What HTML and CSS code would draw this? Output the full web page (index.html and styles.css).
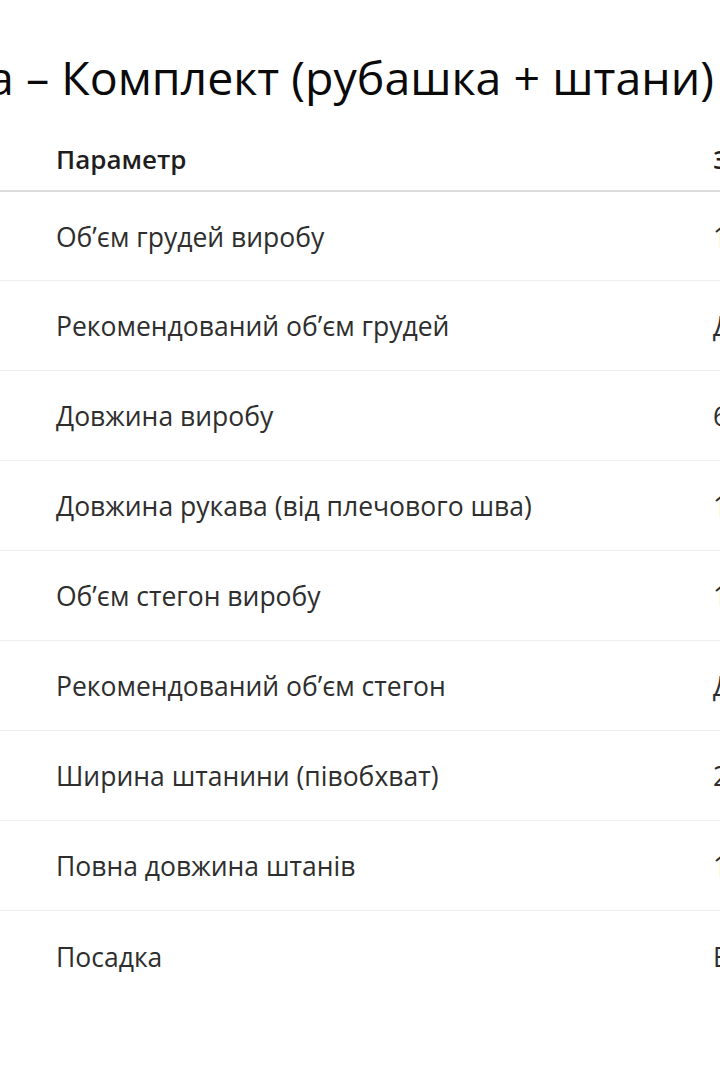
FILE: index.html
```html
<!DOCTYPE html>
<html lang="uk">

<head>
  <meta charset="utf-8">
  <link rel="stylesheet" href="styles.css">
</head>

<body>
  <div class="page">
    <h1 class="title"><span>Піжама – Комплект (рубашка + штани)</span></h1>
    <table class="size-table">
      <colgroup>
        <col class="col-param">
        <col class="col-value">
      </colgroup>
      <thead>
        <tr>
          <th class="param">Параметр</th>
          <th>Значення</th>
        </tr>
      </thead>
      <tbody>
        <tr>
          <td class="param">Об’єм грудей виробу</td>
          <td>112 см</td>
        </tr>
        <tr>
          <td class="param">Рекомендований об’єм грудей</td>
          <td>До 104 см</td>
        </tr>
        <tr>
          <td class="param">Довжина виробу</td>
          <td>68 см</td>
        </tr>
        <tr>
          <td class="param">Довжина рукава (від плечового шва)</td>
          <td>19 см</td>
        </tr>
        <tr>
          <td class="param">Об’єм стегон виробу</td>
          <td>116 см</td>
        </tr>
        <tr>
          <td class="param">Рекомендований об’єм стегон</td>
          <td>До 108 см</td>
        </tr>
        <tr>
          <td class="param">Ширина штанини (півобхват)</td>
          <td>29 см</td>
        </tr>
        <tr>
          <td class="param">Повна довжина штанів</td>
          <td>100 см</td>
        </tr>
        <tr class="last">
          <td class="param">Посадка</td>
          <td>Вільна</td>
        </tr>
      </tbody>
    </table>
  </div>
</body>

</html>
```

FILE: styles.css
```css
* {
  box-sizing: border-box;
}

html,
body {
  margin: 0;
  background: #fff;
}

body {
  font: 26.5px/1.4 "Open Sans", "Noto Sans", Arial, sans-serif;
  color: #2e2e2e;
  overflow: hidden;
}

.page {
  width: 720px;
  overflow: hidden;
}

/* heading */

.title {
  display: flex;
  justify-content: flex-end;
  margin: 0;
  padding: 46px 6px 0 0;
  height: 128px;
  font-size: 46.5px;
  font-weight: 500;
  line-height: 62px;
  color: #0a0a0a;
  white-space: nowrap;
}

/* table */

.size-table {
  width: 940px;
  table-layout: fixed;
  border-collapse: collapse;
}

.col-param {
  width: 697px;
}

.size-table th,
.size-table td {
  padding: 0 16px;
  text-align: left;
  white-space: nowrap;
  vertical-align: middle;
}

.size-table th {
  height: 63px;
  font-size: 26px;
  font-weight: 600;
  color: #1e1e1e;
  border-bottom: 2px solid #dcdcdc;
}

.size-table td {
  height: 90px;
  padding-top: 4px;
  border-bottom: 1px solid #eee;
}

.size-table tbody tr:first-child td {
  height: 89px;
}

.size-table .param {
  padding-left: 56px;
}

.size-table .last td {
  border-bottom: 0;
}
```
